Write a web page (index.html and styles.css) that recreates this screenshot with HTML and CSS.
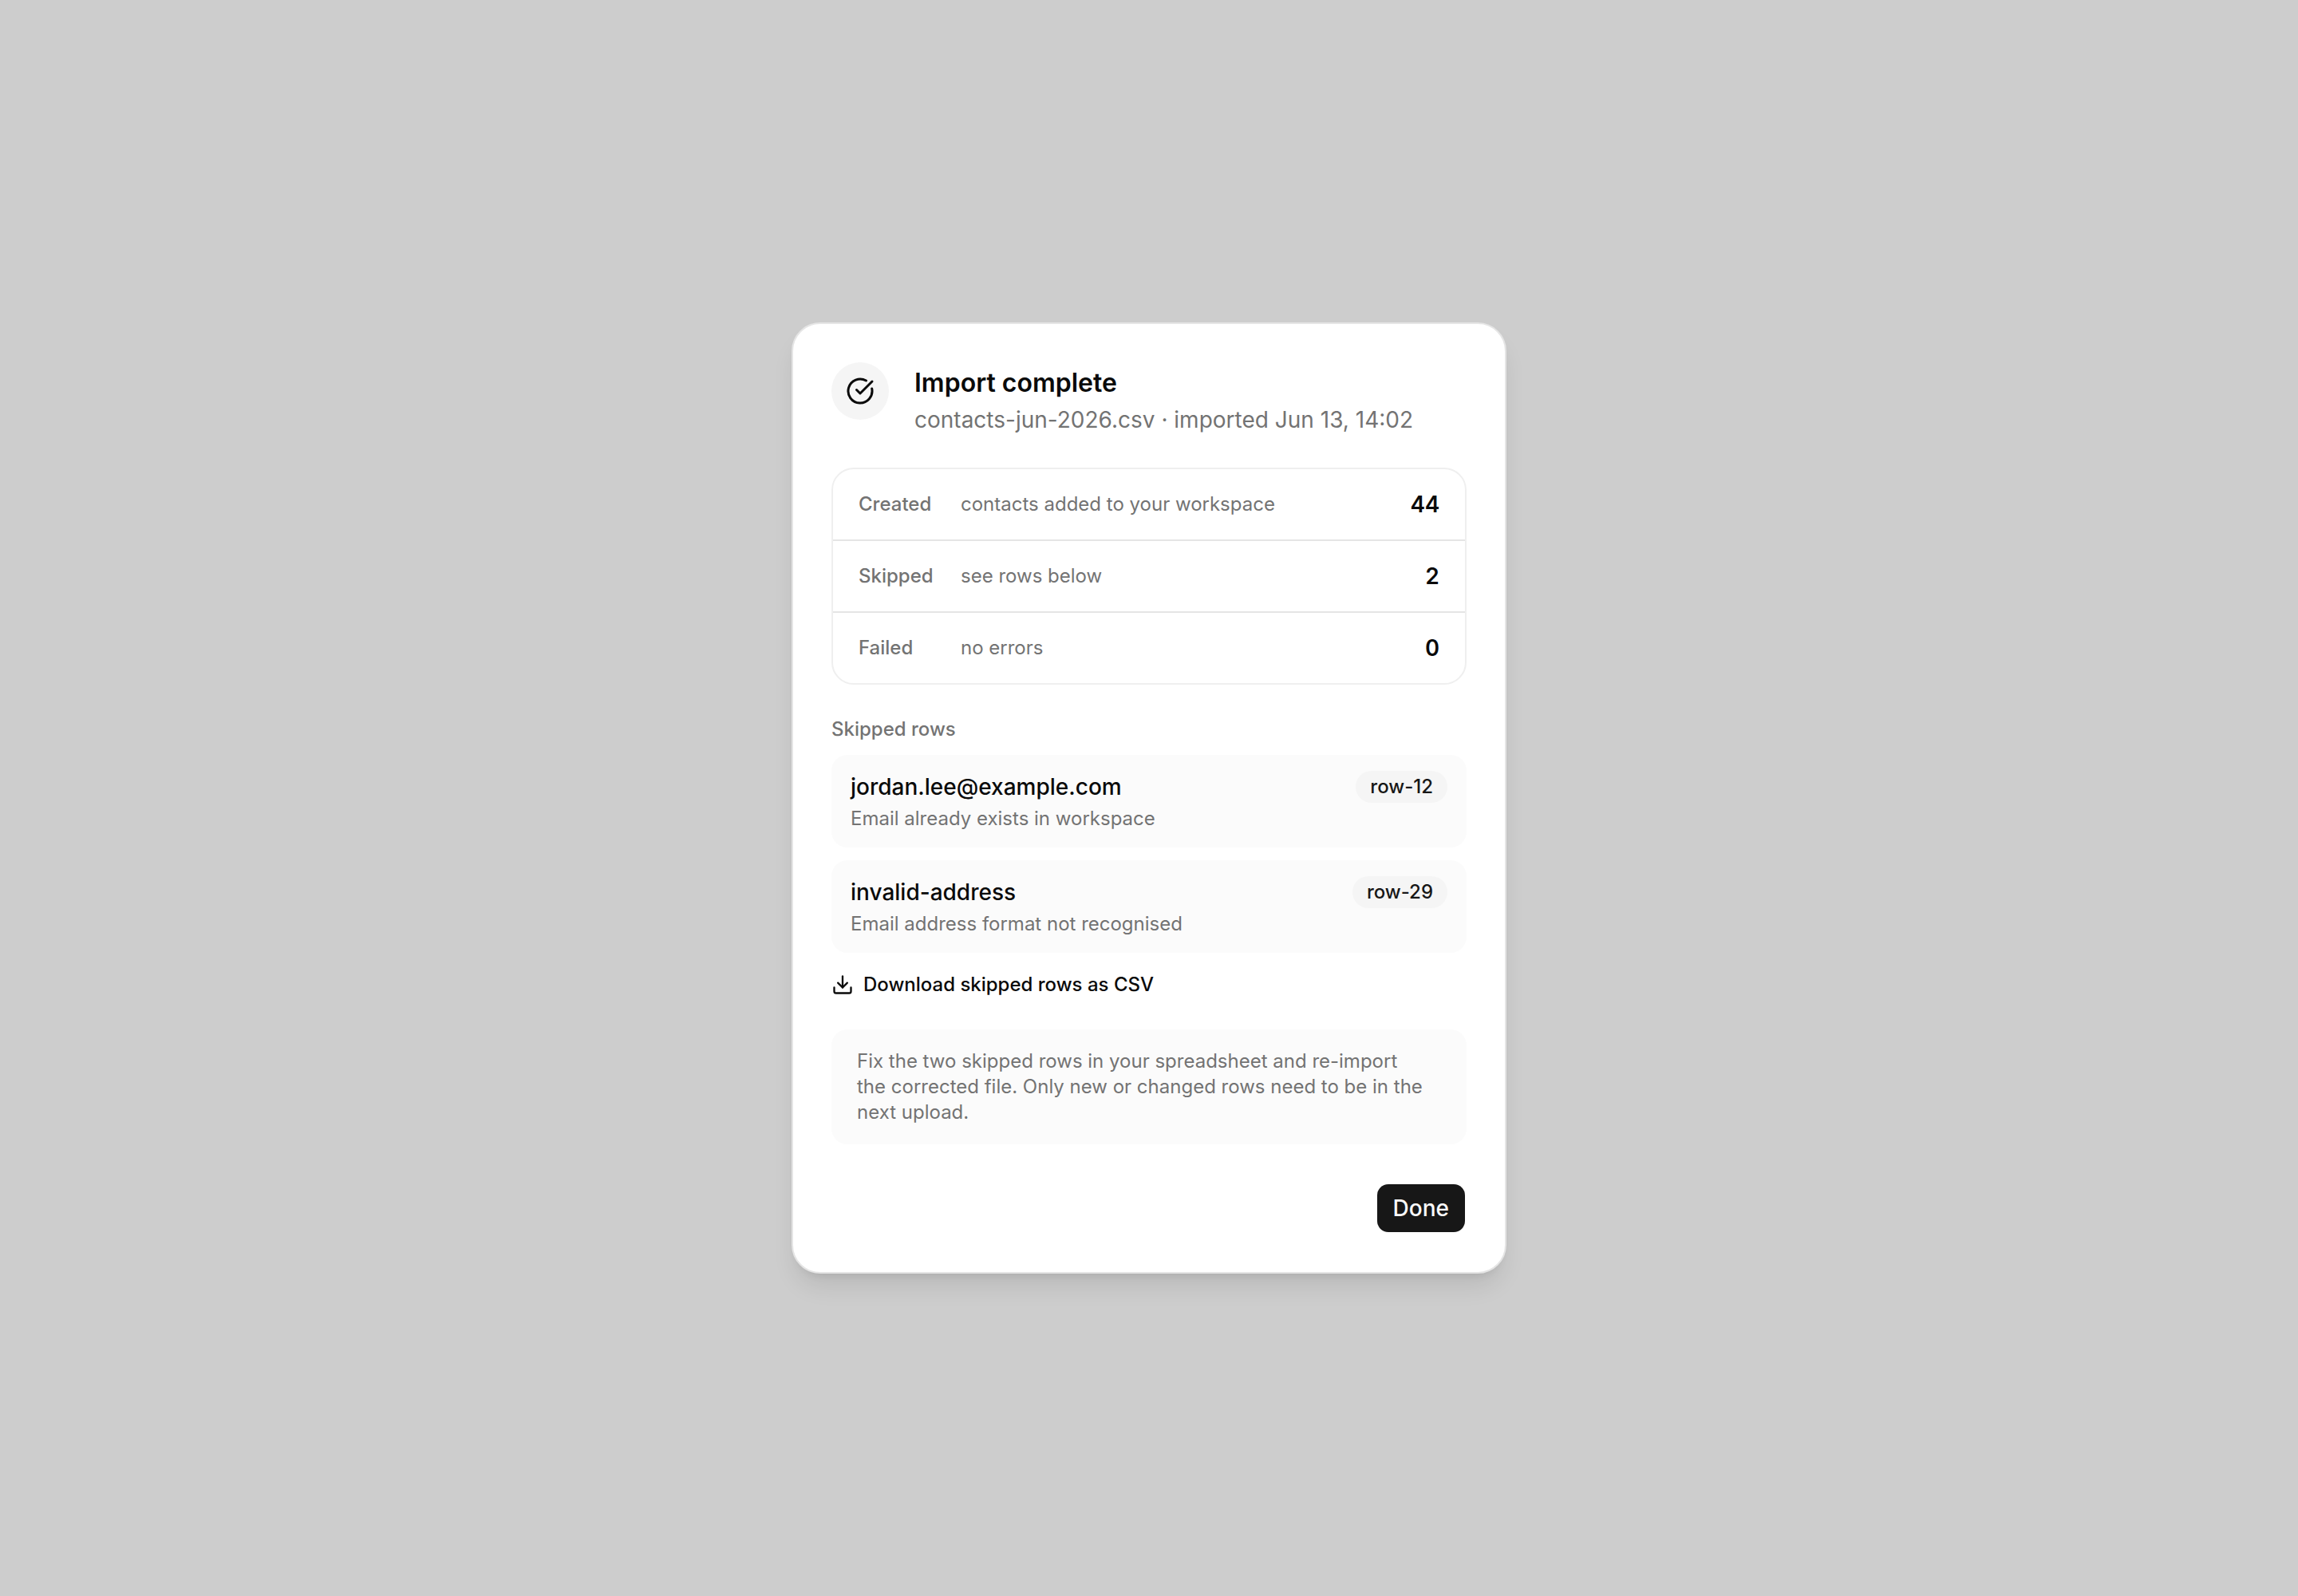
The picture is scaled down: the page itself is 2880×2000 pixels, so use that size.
FILE: index.html
```html
<!DOCTYPE html>
<html lang="en">
<head>
    <meta charset="UTF-8">
    <meta name="viewport" content="width=device-width, initial-scale=1.0">
    <title>Import complete</title>
    <link rel="stylesheet" href="styles.css">
</head>
<body>
    <main class="dialog" role="dialog" aria-labelledby="dialogTitle" aria-describedby="dialogSubtitle">
        <header class="dialog-header">
            <span class="status-icon">
                <svg viewBox="0 0 24 24" aria-hidden="true">
                    <path d="M21.801 10A10 10 0 1 1 17 3.335" />
                    <path d="m9 11 3 3L22 4" />
                </svg>
            </span>
            <div class="heading">
                <h1 id="dialogTitle">Import complete</h1>
                <p id="dialogSubtitle">contacts-jun-2026.csv · imported Jun 13, 14:02</p>
            </div>
        </header>

        <table class="summary">
            <tbody>
                <tr>
                    <th scope="row">Created</th>
                    <td>contacts added to your workspace</td>
                    <td class="count">44</td>
                </tr>
                <tr>
                    <th scope="row">Skipped</th>
                    <td>see rows below</td>
                    <td class="count">2</td>
                </tr>
                <tr>
                    <th scope="row">Failed</th>
                    <td>no errors</td>
                    <td class="count">0</td>
                </tr>
            </tbody>
        </table>

        <section class="skipped">
            <h2>Skipped rows</h2>
            <ul class="skipped-list">
                <li>
                    <div class="skipped-top">
                        <span class="skipped-name">jordan.lee@example.com</span>
                        <span class="badge">row-12</span>
                    </div>
                    <p>Email already exists in workspace</p>
                </li>
                <li>
                    <div class="skipped-top">
                        <span class="skipped-name">invalid-address</span>
                        <span class="badge">row-29</span>
                    </div>
                    <p>Email address format not recognised</p>
                </li>
            </ul>
            <a class="download" href="#">
                <svg viewBox="0 0 24 24" aria-hidden="true">
                    <path d="M12 15V3" />
                    <path d="M21 15v4a2 2 0 0 1-2 2H5a2 2 0 0 1-2-2v-4" />
                    <path d="m7 10 5 5 5-5" />
                </svg>
                Download skipped rows as CSV
            </a>
        </section>

        <p class="note">Fix the two skipped rows in your spreadsheet and re-import the corrected file. Only new or changed rows need to be in the next upload.</p>

        <footer class="dialog-footer">
            <button type="button" class="done-btn">Done</button>
        </footer>
    </main>
</body>
</html>
```
FILE: styles.css
```css
* {
    box-sizing: border-box;
}

body {
    margin: 0;
    min-height: 100vh;
    display: flex;
    justify-content: center;
    align-items: center;
    background: #cdcdcd;
    color: #0a0a0a;
    font-family: Inter, sans-serif;
    font-size: 24px;
    line-height: 32px;
}

h1, h2, p, ul {
    margin: 0;
    padding: 0;
}

svg {
    fill: none;
    stroke: currentColor;
    stroke-width: 2;
    stroke-linecap: round;
    stroke-linejoin: round;
}

.dialog {
    display: flex;
    flex-direction: column;
    gap: 40px;
    width: 100%;
    max-width: 896px;
    padding: 48px;
    background: #fff;
    border: 2px solid #e5e5e5;
    border-radius: 36px;
    box-shadow: 0 20px 30px -6px rgba(0, 0, 0, 0.1), 0 8px 12px -8px rgba(0, 0, 0, 0.1);
}

/* Header */
.dialog-header {
    display: flex;
    align-items: flex-start;
    gap: 32px;
}

.status-icon {
    display: flex;
    justify-content: center;
    align-items: center;
    flex-shrink: 0;
    width: 72px;
    height: 72px;
    border-radius: 50%;
    background: #f5f5f5;
}

.status-icon svg {
    width: 36px;
    height: 36px;
}

.heading {
    display: flex;
    flex-direction: column;
    gap: 4px;
    padding-top: 4px;
}

.heading h1 {
    font-size: 32px;
    font-weight: 600;
    line-height: 44px;
}

.heading p {
    font-size: 28px;
    line-height: 40px;
    color: #737373;
}

/* Result counts */
.summary {
    width: 100%;
    border: 2px solid #efefef;
    border-radius: 28px;
    border-spacing: 0;
}

.summary th,
.summary td {
    padding: 24px 0;
    line-height: 40px;
    font-weight: 400;
    text-align: left;
    color: #737373;
}

.summary th {
    width: 160px;
    padding-left: 32px;
    font-weight: 500;
}

.summary .count {
    padding-right: 32px;
    font-size: 28px;
    font-weight: 600;
    font-variant-numeric: tabular-nums;
    text-align: right;
    color: #0a0a0a;
}

.summary tr:not(:last-child) > * {
    border-bottom: 2px solid #e5e5e5;
}

/* Skipped rows */
.skipped h2 {
    margin-bottom: 16px;
    font-size: 24px;
    font-weight: 500;
    color: #737373;
}

.skipped-list {
    display: flex;
    flex-direction: column;
    gap: 16px;
    margin-bottom: 24px;
    list-style: none;
}

.skipped-list li {
    padding: 20px 24px;
    border-radius: 20px;
    background: #fbfbfb;
}

.skipped-list p {
    margin-top: 4px;
    color: #737373;
}

.skipped-top {
    display: flex;
    justify-content: space-between;
    align-items: center;
    gap: 16px;
}

.skipped-name {
    font-size: 28px;
    font-weight: 500;
    line-height: 40px;
}

.badge {
    padding: 4px 18px;
    border-radius: 20px;
    background: #f5f5f5;
    color: #171717;
    font-weight: 500;
}

.download {
    display: flex;
    align-items: center;
    gap: 12px;
    width: fit-content;
    color: inherit;
    font-weight: 500;
    text-decoration: none;
}

.download:hover {
    text-decoration: underline;
}

.download svg {
    width: 28px;
    height: 28px;
}

.note {
    padding: 24px 32px;
    border-radius: 20px;
    background: #fbfbfb;
    color: #737373;
    text-wrap: pretty;
}

/* Footer */
.dialog-footer {
    display: flex;
    justify-content: flex-end;
    margin-top: 8px;
}

.done-btn {
    height: 64px;
    padding: 0 20px;
    border: 2px solid transparent;
    border-radius: 16px;
    background: #171717;
    background-clip: padding-box;
    color: #fafafa;
    font: inherit;
    font-size: 28px;
    font-weight: 500;
    cursor: pointer;
}

.done-btn:hover {
    background-color: #333;
}
```
